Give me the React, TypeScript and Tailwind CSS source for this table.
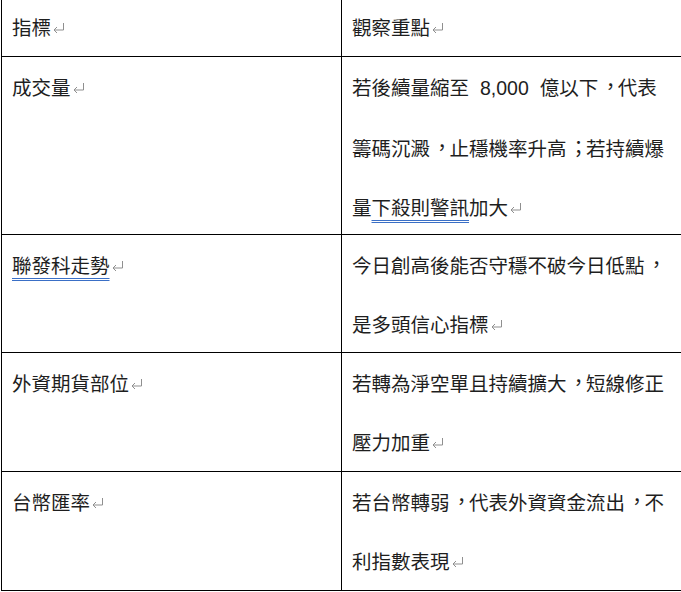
import React from "react";

const Ret = () => (
  <svg
    width="13"
    height="12"
    viewBox="0 0 13 12"
    className="inline-block ml-[1px]"
    style={{ verticalAlign: "1px" }}
  >
    <path d="M11.5 1 V8 H2" fill="none" stroke="#8f8f8f" strokeWidth="1" />
    <path d="M5 5 L2 8 L5 11" fill="none" stroke="#8f8f8f" strokeWidth="1" />
  </svg>
);

const Ul = ({ children }: { children: React.ReactNode }) => (
  <span className="underline decoration-double decoration-[#3a6fc6] decoration-1 underline-offset-[5px]">
    {children}
  </span>
);

const C = ({ ch = "，" }: { ch?: string }) => (
  <span className="inline-block w-[1em] translate-x-[0.12em] -translate-y-[0.06em]">{ch}</span>
);

type Row = { h: string; left: React.ReactNode; right: React.ReactNode[]; header?: boolean };

export default function App() {
  const rows: Row[] = [
    {
      h: "h-[57px]",
      header: true,
      left: <>指標<Ret /></>,
      right: [<>觀察重點<Ret /></>],
    },
    {
      h: "h-[178px]",
      left: <>成交量<Ret /></>,
      right: [
        <>若後續量縮至<span className="font-['Liberation_Sans'] mx-[11px]">8,000</span>億以下<C />代表</>,
        <>籌碼沉澱<C />止穩機率升高<C ch="；" />若持續爆</>,
        <>量<Ul>下殺則警訊</Ul>加大<Ret /></>,
      ],
    },
    {
      h: "h-[118px]",
      left: <><Ul>聯發科走勢</Ul><Ret /></>,
      right: [<>今日創高後能否守穩不破今日低點<C /></>, <>是多頭信心指標<Ret /></>],
    },
    {
      h: "h-[119px]",
      left: <>外資期貨部位<Ret /></>,
      right: [<>若轉為淨空單且持續擴大<C />短線修正</>, <>壓力加重<Ret /></>],
    },
    {
      h: "h-[119px]",
      left: <>台幣匯率<Ret /></>,
      right: [<>若台幣轉弱<C />代表外資資金流出<C />不</>, <>利指數表現<Ret /></>],
    },
  ];

  return (
    <div
      lang="zh-Hant-TW"
      className="w-[681px] h-[592px] overflow-hidden bg-white font-['Noto_Sans_CJK_TC',sans-serif] text-[19.5px] leading-[59px] text-[#1e1e1e]"
    >
      <div className="ml-[1px] w-[720px] border-l border-black">
        {rows.map((r, i) => (
          <div key={i} className={`flex ${r.h} border-b border-black`}>
            <div className="w-[340px] shrink-0 border-r border-black pl-[10px]">
              <div className={r.header ? "-mt-[3px]" : ""}>{r.left}</div>
            </div>
            <div className="flex-1 pl-[10px]">
              <div className={r.header ? "-mt-[3px]" : ""}>
                {r.right.map((line, j) => (
                  <div key={j} className="whitespace-nowrap">
                    {line}
                  </div>
                ))}
              </div>
            </div>
          </div>
        ))}
      </div>
    </div>
  );
}
